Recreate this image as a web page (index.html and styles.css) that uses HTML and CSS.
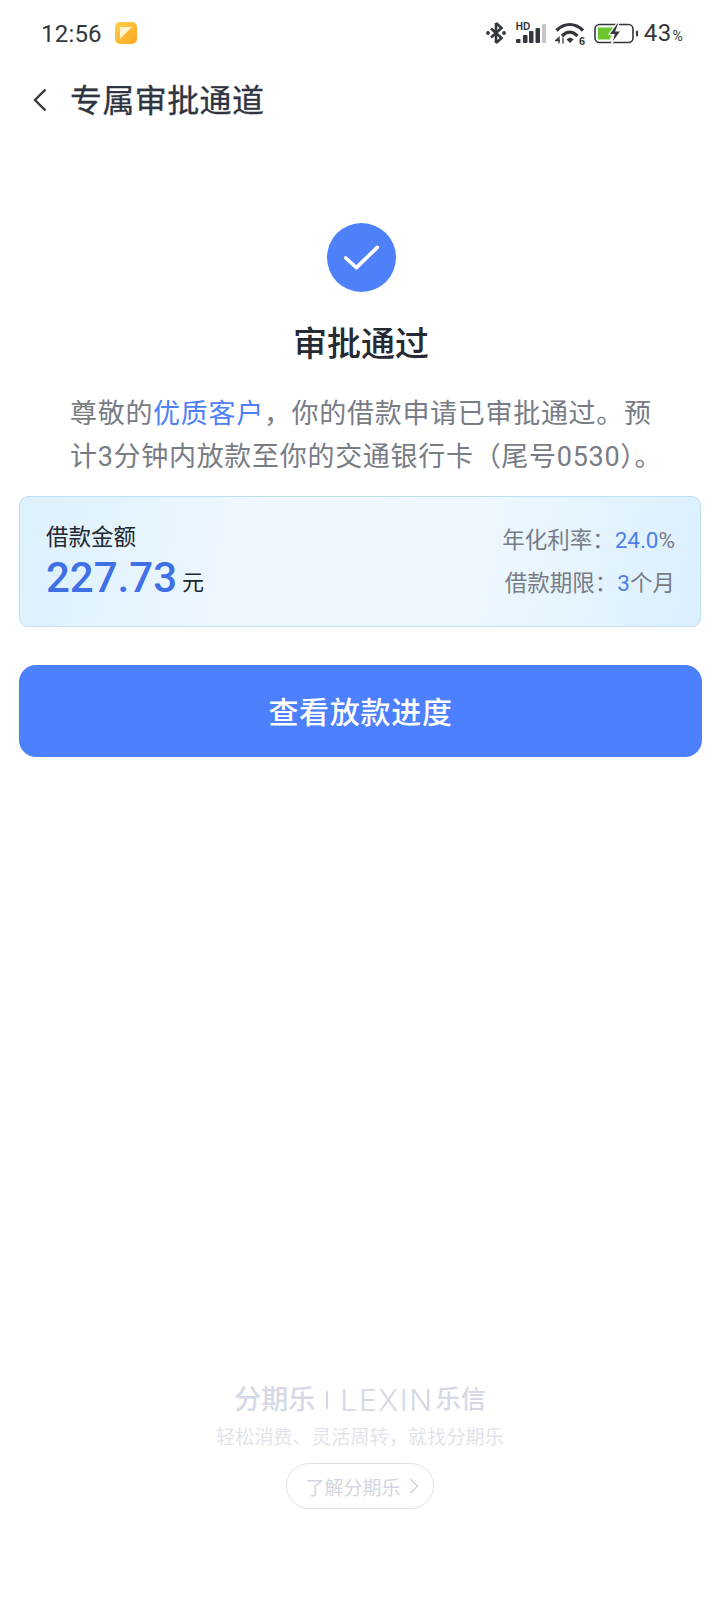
FILE: index.html
```html
<!DOCTYPE html>
<html lang="zh-CN">
<head>
<meta charset="utf-8">
<title>专属审批通道</title>
<link rel="stylesheet" href="styles.css">
</head>
<body>
<div class="page">
  <div class="status">
    <div class="status-left">
      <span class="time">12:56</span>
      <svg class="app-icon" viewBox="0 0 22 22"><defs><linearGradient id="ag" x1="0" y1="0" x2="1" y2="1"><stop offset="0" stop-color="#ffd24d"/><stop offset="1" stop-color="#ffa51f"/></linearGradient></defs><rect width="22" height="22" rx="5" fill="url(#ag)"/><rect x="5" y="5" width="12" height="12" fill="#ffb52e"/><path d="M5 5h12L5 17z" fill="#fff3cf"/></svg>
    </div>
    <div class="status-right">
      <svg class="ic-bt" viewBox="0 0 20 24"><path d="M10 2l5.500 5L5 16.500M10 22l5.500-5L5 7.500M10 2v20" fill="none" stroke="#33373d" stroke-width="2.600"/><circle cx="2" cy="12" r="1.900" fill="#33373d"/><circle cx="18" cy="12" r="1.900" fill="#33373d"/></svg>
      <span class="signal">
        <span class="hd">HD</span>
        <svg class="ic-sig" viewBox="0 0 30 19"><rect x="0" y="15" width="4.500" height="4" rx="1" fill="#33373d"/><rect x="7" y="11" width="4.500" height="8" rx="1" fill="#33373d"/><rect x="13" y="7" width="4.500" height="12" rx="1" fill="#33373d"/><rect x="19.500" y="4" width="4.500" height="15" rx="1" fill="#33373d"/><rect x="26" y="0" width="4" height="19" rx="1" fill="#c4c6c9"/></svg>
      </span>
      <svg class="ic-wifi" viewBox="0 0 31 24"><path d="M1.500 9.500C9.500 1.500 20 1.500 28 9.500" fill="none" stroke="#33373d" stroke-width="3.200"/><path d="M7 15c5-5 10.500-5 15.500 0" fill="none" stroke="#33373d" stroke-width="3.200"/><path d="M11.500 18.500c2.500-2.500 4.500-2.500 7 0l-3.500 3.500z" fill="#33373d"/><path d="M1 19.500l3-3v6M0 19.500h5M8 22.500v-6" fill="none" stroke="#33373d" stroke-width="1.300"/><text x="24" y="23.500" class="wifi-six">6</text></svg>
      <svg class="ic-bat" viewBox="0 0 44 21"><rect x="1" y="1.500" width="38" height="18" rx="4.500" fill="none" stroke="#33373d" stroke-width="1.600"/><path d="M4 4.500h16l-4 12H4z" fill="#6cc72f"/><path d="M23 0l-8 11.500h5l-2.500 9.500 9.500-13h-5l3-8z" fill="#33373d" stroke="#fff" stroke-width="1.200"/><rect x="42" y="7.500" width="2" height="6" rx="1" fill="#33373d"/></svg>
      <span class="battery-text">43<span class="pct">%</span></span>
    </div>
  </div>

  <div class="nav">
    <svg class="back" viewBox="0 0 14 24"><path d="M12.500 1.500L2 12l10.500 10.500" fill="none" stroke="#33373f" stroke-width="2.400"/></svg>
    <h1 class="nav-title">专属审批通道</h1>
  </div>

  <div class="result">
    <svg class="check" viewBox="0 0 68 68"><circle cx="34" cy="34" r="34" fill="#4d80f9"/><path d="M18.500 34.500L29 44L49.500 24" fill="none" stroke="#fff" stroke-width="3.600" stroke-linecap="round" stroke-linejoin="round"/></svg>
    <h2 class="result-title">审批通过</h2>
    <p class="result-desc">尊敬的<span class="hl">优质客户</span>，你的借款申请已审批通过。预计3分钟内放款至你的交通银行卡（尾号0530）。</p>
  </div>

  <div class="card">
    <div class="amount-col">
      <div class="amount-label">借款金额</div>
      <div class="amount-row"><span class="amount">227.73</span><span class="unit">元</span></div>
    </div>
    <div class="terms">
      <div class="term">年化利率：<span class="term-hl">24.0</span>%</div>
      <div class="term">借款期限：<span class="term-hl">3</span>个月</div>
    </div>
  </div>

  <button class="cta">查看放款进度</button>

  <div class="footer">
    <div class="brand"><span class="brand-cn">分期乐</span><span class="brand-sep"></span><span class="brand-en">LEXIN</span><span class="brand-cn2">乐信</span></div>
    <div class="slogan">轻松消费、灵活周转，就找分期乐</div>
    <div class="learn">了解分期乐<svg class="learn-arrow" viewBox="0 0 10 18"><path d="M1.500 2l7 7-7 7" fill="none" stroke="#d3d6e0" stroke-width="1.500"/></svg></div>
  </div>
</div>
</body>
</html>
```

FILE: styles.css
```css
* { box-sizing: border-box; }
html, body { margin: 0; padding: 0; background: #fff; }
body { font-family: Roboto, "Noto Sans CJK SC", sans-serif; }
.page { width: 720px; height: 1600px; display: flex; flex-direction: column; overflow: hidden; }

.status { height: 66px; flex: none; padding: 0 37px 0 41px; display: flex; align-items: center; justify-content: space-between; }
.status-left { display: flex; align-items: center; gap: 13px; }
.time { font-size: 24px; color: #33373d; letter-spacing: 0.2px; line-height: 30px; padding-top: 1px; }
.app-icon { width: 22px; height: 22px; display: block; }
.status-right { display: flex; align-items: center; }
.ic-bt { width: 20px; height: 24px; display: block; }
.signal { width: 30px; height: 22px; margin-left: 10px; position: relative; display: block; }
.hd { position: absolute; left: 0; top: 0; font-size: 10px; line-height: 9px; font-weight: 700; color: #33373d; font-family: "Liberation Sans", sans-serif; }
.ic-sig { position: absolute; left: 0; top: 2px; width: 30px; height: 19px; display: block; }
.ic-wifi { width: 31px; height: 24px; margin-left: 9px; display: block; }
.wifi-six { font-size: 11px; font-weight: 700; fill: #33373d; font-family: "Liberation Sans", sans-serif; }
.ic-bat { width: 44px; height: 21px; margin-left: 8px; display: block; }
.battery-text { font-size: 24px; color: #33373d; margin-left: 6px; line-height: 28px; letter-spacing: 0.3px; padding-top: 3px; }
.pct { font-size: 14px; margin-left: 1px; }

.nav { height: 68px; flex: none; padding-left: 33px; display: flex; align-items: center; }
.back { width: 14px; height: 24px; display: block; }
.nav-title { margin: 0 0 0 23px; padding-top: 2px; font-size: 32px; font-weight: 400; line-height: 44px; color: #2f3440; letter-spacing: 0.4px; -webkit-text-stroke: 0.3px #2f3440; }

.result { margin-top: 89px; display: flex; flex-direction: column; align-items: center; }
.check { width: 69px; height: 69px; display: block; margin-left: 2px; }
.result-title { margin: 29px 0 0 2px; font-size: 34px; line-height: 46px; font-weight: 500; color: #262a33; letter-spacing: 0; white-space: nowrap; }
.result-desc { align-self: flex-start; width: 596px; margin: 26px 0 0 70px; font-size: 27px; line-height: 43px; letter-spacing: 0.7px; color: #787c85; }
.hl { color: #4d80f9; }

.card { margin: 17px 19px 0; height: 131px; flex: none; padding: 0 25px 0 26px; border: 1px solid #c0e0f5; border-radius: 9px; background: linear-gradient(100deg, #dcf0fd 0%, #eff8ff 35%, #eef8ff 65%, #dbeffd 100%); display: flex; justify-content: space-between; align-items: center; }
.amount-col { padding-top: 10px; }
.amount-label { font-size: 22.500px; line-height: 30px; color: #23272f; }
.amount-row { margin-top: 1px; line-height: 50px; white-space: nowrap; }
.amount { font-size: 42px; font-weight: 500; color: #4070e6; }
.unit { font-size: 22px; margin-left: 5px; color: #23272f; vertical-align: 2px; }
.terms { display: flex; flex-direction: column; align-items: flex-end; gap: 13px; }
.term { font-size: 22.500px; line-height: 30px; color: #787c85; }
.term-hl { color: #4d80e8; }

.cta { margin: 38px 18px 0 19px; height: 92px; flex: none; border: 0; border-radius: 17px; background: #4d80ff; color: #fff; font-family: inherit; font-size: 30px; font-weight: 500; letter-spacing: 0.7px; padding: 0 0 3px; }

.footer { margin-top: auto; padding-bottom: 91px; display: flex; flex-direction: column; align-items: center; }
.brand { height: 32px; display: flex; align-items: center; color: #d5d8e6; line-height: 32px; }
.brand-cn { font-size: 27px; font-weight: 500; }
.brand-sep { width: 2px; height: 18px; background: #d5d8e6; margin: 0 12px 0 11px; }
.brand-en { font-size: 30px; font-weight: 300; letter-spacing: 1.600px; font-family: Inter, Roboto, sans-serif; }
.brand-cn2 { font-size: 25px; margin-left: 2px; font-weight: 500; }
.slogan { margin-top: 8px; font-size: 19px; line-height: 28px; color: #e1e3ec; letter-spacing: 0.2px; }
.learn { margin: 11px 0 0; width: 148px; height: 46px; padding-left: 4px; border: 1.500px solid #e0e2ea; border-radius: 23px; display: flex; align-items: center; justify-content: center; font-size: 19px; color: #d3d6e0; }
.learn-arrow { width: 10px; height: 18px; margin-left: 8px; display: block; }
```
